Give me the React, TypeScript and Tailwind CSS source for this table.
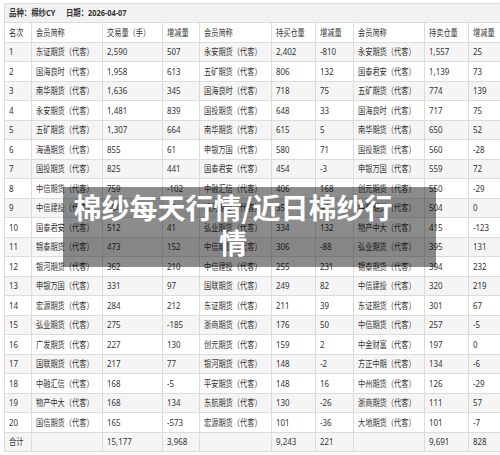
import React from "react";

type Row = [string, string, string, string, string, string, string, string, string, string];

const rows: Row[] = [
  ["1", "东证期货（代客）", "2,590", "507", "永安期货（代客）", "2,402", "-810", "永安期货（代客）", "1,557", "25"],
  ["2", "国海良时（代客）", "1,958", "613", "五矿期货（代客）", "806", "132", "国泰君安（代客）", "1,139", "73"],
  ["3", "南华期货（代客）", "1,636", "345", "国海良时（代客）", "718", "75", "五矿期货（代客）", "774", "139"],
  ["4", "永安期货（代客）", "1,481", "839", "国投期货（代客）", "648", "33", "国海良时（代客）", "717", "75"],
  ["5", "五矿期货（代客）", "1,307", "664", "南华期货（代客）", "615", "5", "南华期货（代客）", "650", "52"],
  ["6", "海通期货（代客）", "855", "61", "申银万国（代客）", "580", "71", "国投期货（代客）", "560", "-28"],
  ["7", "国投期货（代客）", "825", "441", "国泰君安（代客）", "454", "-3", "申银万国（代客）", "559", "72"],
  ["8", "中信期货（代客）", "759", "-102", "中融汇信（代客）", "406", "168", "创元期货（代客）", "550", "-29"],
  ["9", "中信建投（代客）", "554", "42", "银河期货（代客）", "354", "94", "中辉期货（代客）", "504", "0"],
  ["10", "国泰君安（代客）", "512", "41", "弘业期货（代客）", "334", "132", "物产中大（代客）", "415", "-123"],
  ["11", "锦泰期货（代客）", "473", "152", "中信期货（代客）", "306", "-88", "弘业期货（代客）", "395", "131"],
  ["12", "银河期货（代客）", "362", "210", "中信建投（代客）", "255", "231", "锦泰期货（代客）", "394", "232"],
  ["13", "申银万国（代客）", "331", "97", "国联期货（代客）", "249", "82", "中信建投（代客）", "320", "219"],
  ["14", "宏源期货（代客）", "284", "212", "东证期货（代客）", "211", "39", "东证期货（代客）", "301", "67"],
  ["15", "弘业期货（代客）", "275", "-185", "浙商期货（代客）", "176", "50", "中信期货（代客）", "257", "-5"],
  ["16", "广发期货（代客）", "227", "130", "创元期货（代客）", "159", "2", "中金财富（代客）", "197", "0"],
  ["17", "国联期货（代客）", "217", "77", "银河期货（代客）", "148", "-2", "方正中期（代客）", "134", "-6"],
  ["18", "中融汇信（代客）", "168", "-5", "平安期货（代客）", "148", "16", "中州期货（代客）", "126", "-29"],
  ["19", "物产中大（代客）", "168", "134", "东航期货（代客）", "130", "-26", "浙商期货（代客）", "111", "57"],
  ["20", "国信期货（代客）", "165", "-573", "宏源期货（代客）", "101", "-36", "大地期货（代客）", "101", "-7"],
  ["合计", "", "15,177", "3,968", "", "9,243", "221", "", "9,691", "828"],
];

const head: Row = ["名次", "会员简称", "交易量（手）", "增减量", "会员简称", "持买仓量", "增减量", "会员简称", "持卖仓量", "增减量"];

function Cell({ text }: { text: string }) {
  const numeric = /^[-0-9,]+$/.test(text);
  return (
    <div className="border-r border-[#dcdcdc] pl-[4px] flex items-center overflow-visible">
      <span
        className={
          "inline-block origin-left whitespace-nowrap " + (numeric ? "scale-x-[0.88]" : "scale-x-[0.8]")
        }
      >
        {text}
      </span>
    </div>
  );
}

function TableRow({ cells, shaded }: { cells: Row; shaded: boolean }) {
  return (
    <div
      className={
        "grid grid-cols-[26.7px_71px_60.6px_37px_71.4px_44.6px_38px_71.2px_44px_38px] h-[19.5px] border-b border-[#dcdcdc] " +
        (shaded ? "bg-[#f5f5f5]" : "bg-white")
      }
    >
      {cells.map((c, i) => (
        <Cell key={i} text={c} />
      ))}
    </div>
  );
}

export default function App() {
  return (
    <div
      className="relative w-[500px] h-[455px] overflow-hidden bg-white text-[#333333] text-[9px]"
      style={{ fontFamily: '"Noto Sans", "Noto Sans CJK SC", sans-serif' }}
    >
      <div className="pt-[3px] pl-[4px]">
        <div className="w-[510px] border-t border-l border-[#dcdcdc]">
          <div className="h-[19px] border-b border-[#dcdcdc] bg-[#f2f2f2] flex items-center pl-[4px] font-bold">
            <span className="inline-block origin-left scale-x-[0.82] whitespace-nowrap">
              品种：棉纱CY<span className="inline-block w-[13px]" />日期：2026-04-07
            </span>
          </div>
          <TableRow cells={head} shaded={false} />
          {rows.map((r, i) => (
            <TableRow key={i} cells={r} shaded={i % 2 === 0} />
          ))}
        </div>
      </div>

      <div
        className="absolute left-[63px] top-[187px] w-[373px] h-[80px] bg-black/45 pt-[3px] pl-[2px] pr-[35px] text-center text-white font-bold text-[28px] leading-[35px]"
        style={{ fontFamily: '"Noto Sans CJK SC", sans-serif' }}
      >
        棉纱每天行情/近日棉纱行情
      </div>
    </div>
  );
}
